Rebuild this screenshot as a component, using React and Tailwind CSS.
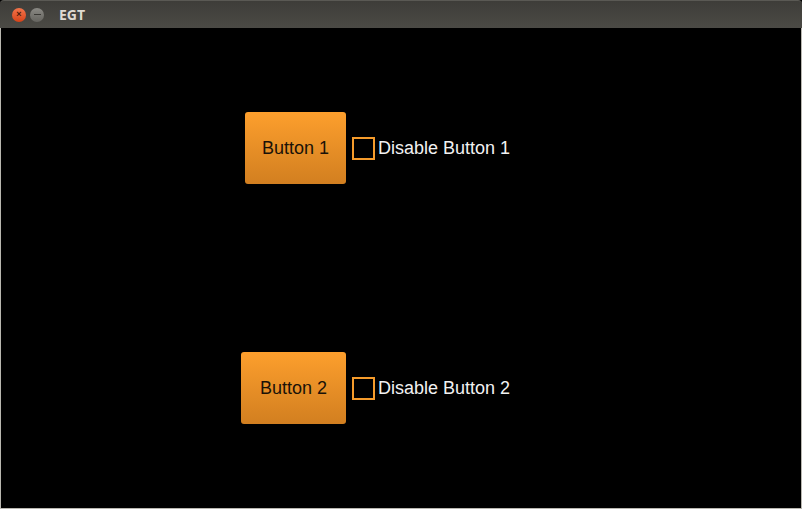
import React, { useState } from "react";

const font = { fontFamily: '"Liberation Sans", Arial, sans-serif' };

const Row = ({ label, name, disabled, onToggle, widthClass }) => (
  <>
    <div className="flex justify-end">
      <button
        disabled={disabled}
        className={`${widthClass} h-[72px] rounded-[3px] bg-gradient-to-b from-[#fd9f2d] to-[#d27f20] text-[18px] text-[#1a1208] disabled:opacity-50`}
      >
        {name}
      </button>
    </div>
    <label className="flex items-center ml-[6px] cursor-pointer select-none">
      <span
        onClick={onToggle}
        className="w-[23px] h-[23px] border-2 border-[#f59b2b] flex items-center justify-center text-[#f59b2b] text-[14px]"
      >
        {disabled ? "✓" : ""}
      </span>
      <span className="ml-[3px] text-[18px] leading-[24px] text-[#f2f2f2]">{label}</span>
    </label>
  </>
);

export default function App() {
  const [d1, setD1] = useState(false);
  const [d2, setD2] = useState(false);

  return (
    <div className="w-[802px] h-[509px] flex flex-col bg-black" style={font}>
      {/* Title bar */}
      <div className="h-[28px] flex items-center rounded-t-[4px] bg-gradient-to-b from-[#3e3d39] to-[#4b4a45] border-t border-[#5a5954]">
        <div className="ml-[12px] w-[14px] h-[14px] rounded-full bg-gradient-to-b from-[#f3744a] to-[#d64216] flex items-center justify-center text-[9px] leading-none text-[#4a1a0a] font-bold">
          ×
        </div>
        <div className="ml-[4px] w-[14px] h-[14px] rounded-full bg-gradient-to-b from-[#8a8984] to-[#65645f] flex items-center justify-center">
          <div className="w-[7px] h-[1.5px] bg-[#3a3935]" />
        </div>
        <span
          className="ml-[15px] text-[14px] font-bold text-[#dfdbd2]"
          style={{ fontFamily: '"Open Sans", "DejaVu Sans", sans-serif' }}
        >
          EGT
        </span>
      </div>

      {/* Body */}
      <div className="flex-1 border-x border-b border-[#b9b7b0] bg-black">
        <div className="grid grid-cols-[345px_auto] gap-y-[168px] pt-[84px]">
          <Row label="Disable Button 1" name="Button 1" disabled={d1} onToggle={() => setD1(!d1)} widthClass="w-[101px]" />
          <Row label="Disable Button 2" name="Button 2" disabled={d2} onToggle={() => setD2(!d2)} widthClass="w-[105px]" />
        </div>
      </div>
    </div>
  );
}
